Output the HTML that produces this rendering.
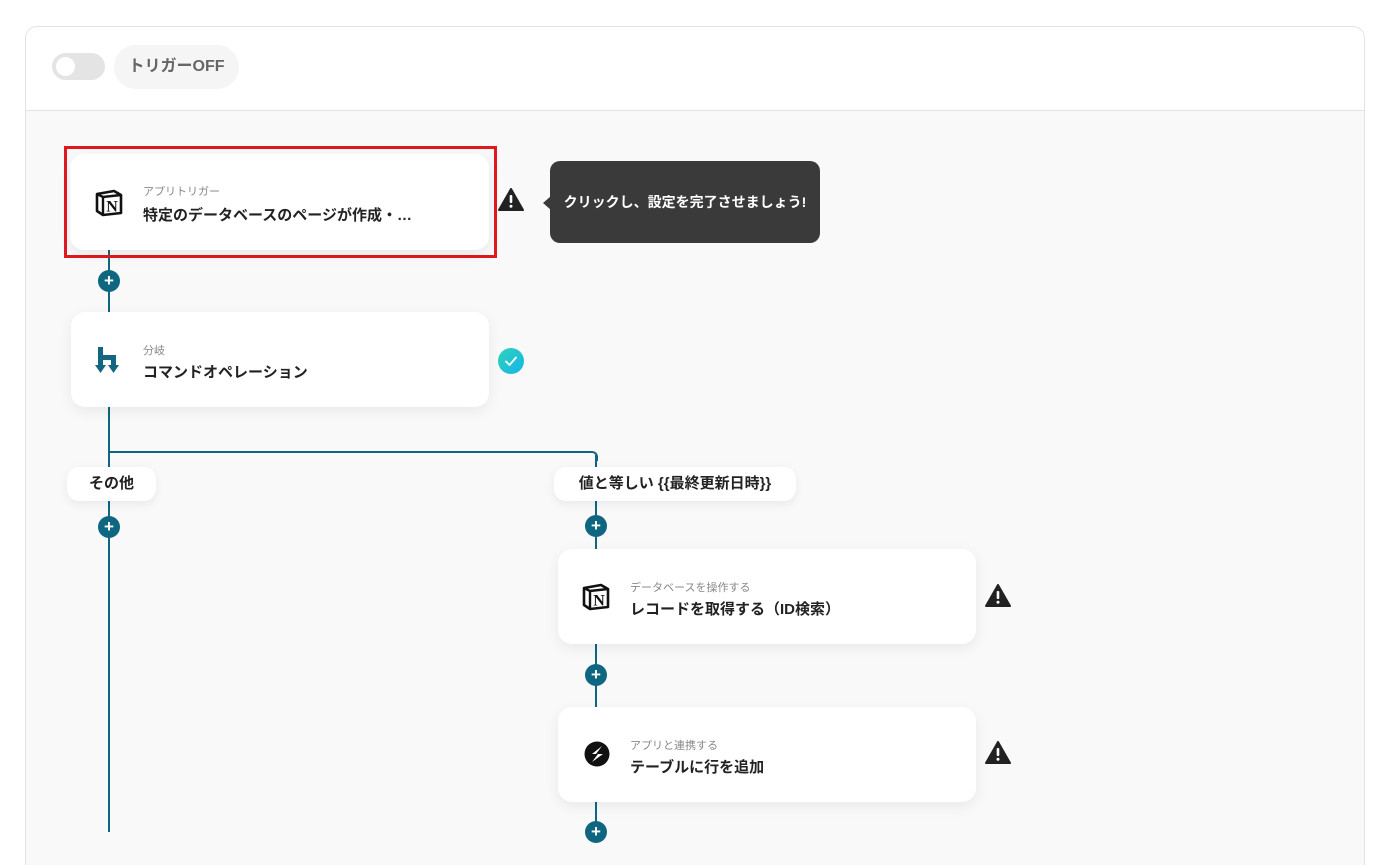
<!DOCTYPE html>
<html><head><meta charset="utf-8"><style>
*{box-sizing:border-box;margin:0;padding:0}
html,body{width:1388px;height:865px;overflow:hidden}
body{background:#fff;font-family:"Liberation Sans","Noto Sans CJK JP",sans-serif;position:relative;color:#222}
.panel{position:absolute;left:25px;top:26px;width:1340px;height:839px;border:1px solid #e3e3e3;border-bottom:none;border-radius:12px 12px 0 0;background:#f9f9f9;overflow:hidden}
.hdr{position:absolute;left:0;top:0;width:100%;height:84px;background:#fff;border-bottom:1px solid #e3e3e3}
.a{position:absolute}
.card{position:absolute;background:#fff;border-radius:14px;box-shadow:0 4px 14px rgba(0,0,0,.07)}
.sub{position:absolute;font-size:11px;color:#888}
.ttl{position:absolute;font-size:15px;font-weight:bold;color:#222}
.vl{position:absolute;width:2px;background:#0e6680}
.plus{position:absolute;width:22px;height:22px;border-radius:50%;background:#0e6680;color:#fff;font-weight:bold;font-size:17px;line-height:21px;text-align:center}
.pill{position:absolute;background:#fff;border-radius:12px;box-shadow:0 3px 10px rgba(0,0,0,.07);font-size:15px;font-weight:bold;text-align:center;line-height:34px;height:34px}
</style></head><body>
<div class="panel">
<div class="hdr">
 <div class="a" style="left:26px;top:26px;width:53px;height:27px;border-radius:14px;background:#e4e4e4"></div>
 <div class="a" style="left:30px;top:30px;width:19px;height:19px;border-radius:50%;background:#fff"></div>
 <div class="a" style="left:88px;top:18px;width:125px;height:44px;border-radius:22px;background:#f5f5f5;color:#666;font-weight:bold;font-size:16px;line-height:44px;text-align:center">トリガーOFF</div>
</div>
</div>
<div class="vl" style="left:108px;top:250px;height:582px"></div>
<div class="a" style="left:108px;top:451px;width:490px;height:10px;border-top:2px solid #0e6680;border-right:2px solid #0e6680;border-top-right-radius:6px"></div>
<div class="vl" style="left:595px;top:455px;height:380px"></div>

<div class="a" style="left:64px;top:146px;width:433px;height:112px;border:3px solid #e0191f"></div>
<div class="card" style="left:70px;top:154px;width:419px;height:96px"></div>
<div class="sub" style="left:143px;top:183px">アプリトリガー</div>
<div class="ttl" style="left:143px;top:204px">特定のデータベースのページが作成・…</div>

<div class="card" style="left:71px;top:312px;width:418px;height:95px"></div>
<div class="sub" style="left:143px;top:342px">分岐</div>
<div class="ttl" style="left:143px;top:361px">コマンドオペレーション</div>

<div class="card" style="left:558px;top:549px;width:418px;height:95px"></div>
<div class="sub" style="left:630px;top:579px">データベースを操作する</div>
<div class="ttl" style="left:630px;top:598px">レコードを取得する（ID検索）</div>

<div class="card" style="left:558px;top:707px;width:418px;height:95px"></div>
<div class="sub" style="left:630px;top:737px">アプリと連携する</div>
<div class="ttl" style="left:630px;top:756px">テーブルに行を追加</div>

<svg class="a" style="left:95px;top:189px" width="28" height="28" viewBox="0 0 28 28"><path d="M2 5 L19 2 L26 6 L26 24 L8 26 L2 22 Z" fill="#fff" stroke="#111" stroke-width="2.6" stroke-linejoin="round"/><path d="M2 5 L8 8 L26 6 M8 8 L8 26" fill="none" stroke="#111" stroke-width="2.4"/><text x="17" y="22.5" font-family="Liberation Serif,serif" font-weight="bold" font-size="16" text-anchor="middle" fill="#111">N</text></svg>
<svg class="a" style="left:582px;top:583px" width="28" height="28" viewBox="0 0 28 28"><path d="M2 5 L19 2 L26 6 L26 24 L8 26 L2 22 Z" fill="#fff" stroke="#111" stroke-width="2.6" stroke-linejoin="round"/><path d="M2 5 L8 8 L26 6 M8 8 L8 26" fill="none" stroke="#111" stroke-width="2.4"/><text x="17" y="22.5" font-family="Liberation Serif,serif" font-weight="bold" font-size="16" text-anchor="middle" fill="#111">N</text></svg>
<svg class="a" style="left:95px;top:346px" width="28" height="30" viewBox="0 0 28 30" fill="#136680"><rect x="3" y="1" width="5" height="20"/><path d="M8 9 H21 V21 H16 V14 H8Z"/><path d="M0 19 H11 L5.5 27Z"/><path d="M13 19 H24 L18.5 27Z"/></svg>
<svg class="a" style="left:584px;top:741px" width="26" height="26" viewBox="0 0 26 26"><circle cx="13" cy="13" r="12.5" fill="#111"/><path d="M18 5 L8 13 L14 13 L8 21 L19 13 L12 13 Z" fill="#fff"/></svg>

<svg class="a" style="left:498px;top:188px" width="26" height="24" viewBox="0 0 26 24"><path d="M13 1 L25 22 H1 Z" fill="#222" stroke="#222" stroke-width="2" stroke-linejoin="round"/><rect x="11.7" y="7" width="2.6" height="8" rx="1" fill="#fff"/><circle cx="13" cy="18.3" r="1.5" fill="#fff"/></svg>
<svg class="a" style="left:985px;top:584px" width="26" height="24" viewBox="0 0 26 24"><path d="M13 1 L25 22 H1 Z" fill="#222" stroke="#222" stroke-width="2" stroke-linejoin="round"/><rect x="11.7" y="7" width="2.6" height="8" rx="1" fill="#fff"/><circle cx="13" cy="18.3" r="1.5" fill="#fff"/></svg>
<svg class="a" style="left:985px;top:741px" width="26" height="24" viewBox="0 0 26 24"><path d="M13 1 L25 22 H1 Z" fill="#222" stroke="#222" stroke-width="2" stroke-linejoin="round"/><rect x="11.7" y="7" width="2.6" height="8" rx="1" fill="#fff"/><circle cx="13" cy="18.3" r="1.5" fill="#fff"/></svg>

<div class="a" style="left:550px;top:161px;width:270px;height:82px;background:#3a3a3a;border-radius:10px;color:#fff;font-size:14px;font-weight:bold;line-height:82px;text-align:center">クリックし、設定を完了させましょう!</div>
<div class="a" style="left:543px;top:196px;width:0;height:0;border-top:7px solid transparent;border-bottom:7px solid transparent;border-right:8px solid #3a3a3a"></div>

<svg class="a" style="left:498px;top:348px" width="26" height="26" viewBox="0 0 26 26"><defs><linearGradient id="g" x1="0" y1="0" x2="1" y2="1"><stop offset="0" stop-color="#2dd4b8"/><stop offset="1" stop-color="#16b4ea"/></linearGradient></defs><circle cx="13" cy="13" r="13" fill="url(#g)"/><path d="M8 13.5 L11.5 17 L18 9.5" fill="none" stroke="#fff" stroke-width="1.8" stroke-linecap="round" stroke-linejoin="round"/></svg>

<div class="plus" style="left:98px;top:270px">+</div>
<div class="plus" style="left:98px;top:516px">+</div>
<div class="plus" style="left:585px;top:515px">+</div>
<div class="plus" style="left:585px;top:664px">+</div>
<div class="plus" style="left:585px;top:821px">+</div>

<div class="pill" style="left:67px;top:467px;width:89px">その他</div>
<div class="pill" style="left:554px;top:467px;width:242px">値と等しい {{最終更新日時}}</div>
</body></html>
